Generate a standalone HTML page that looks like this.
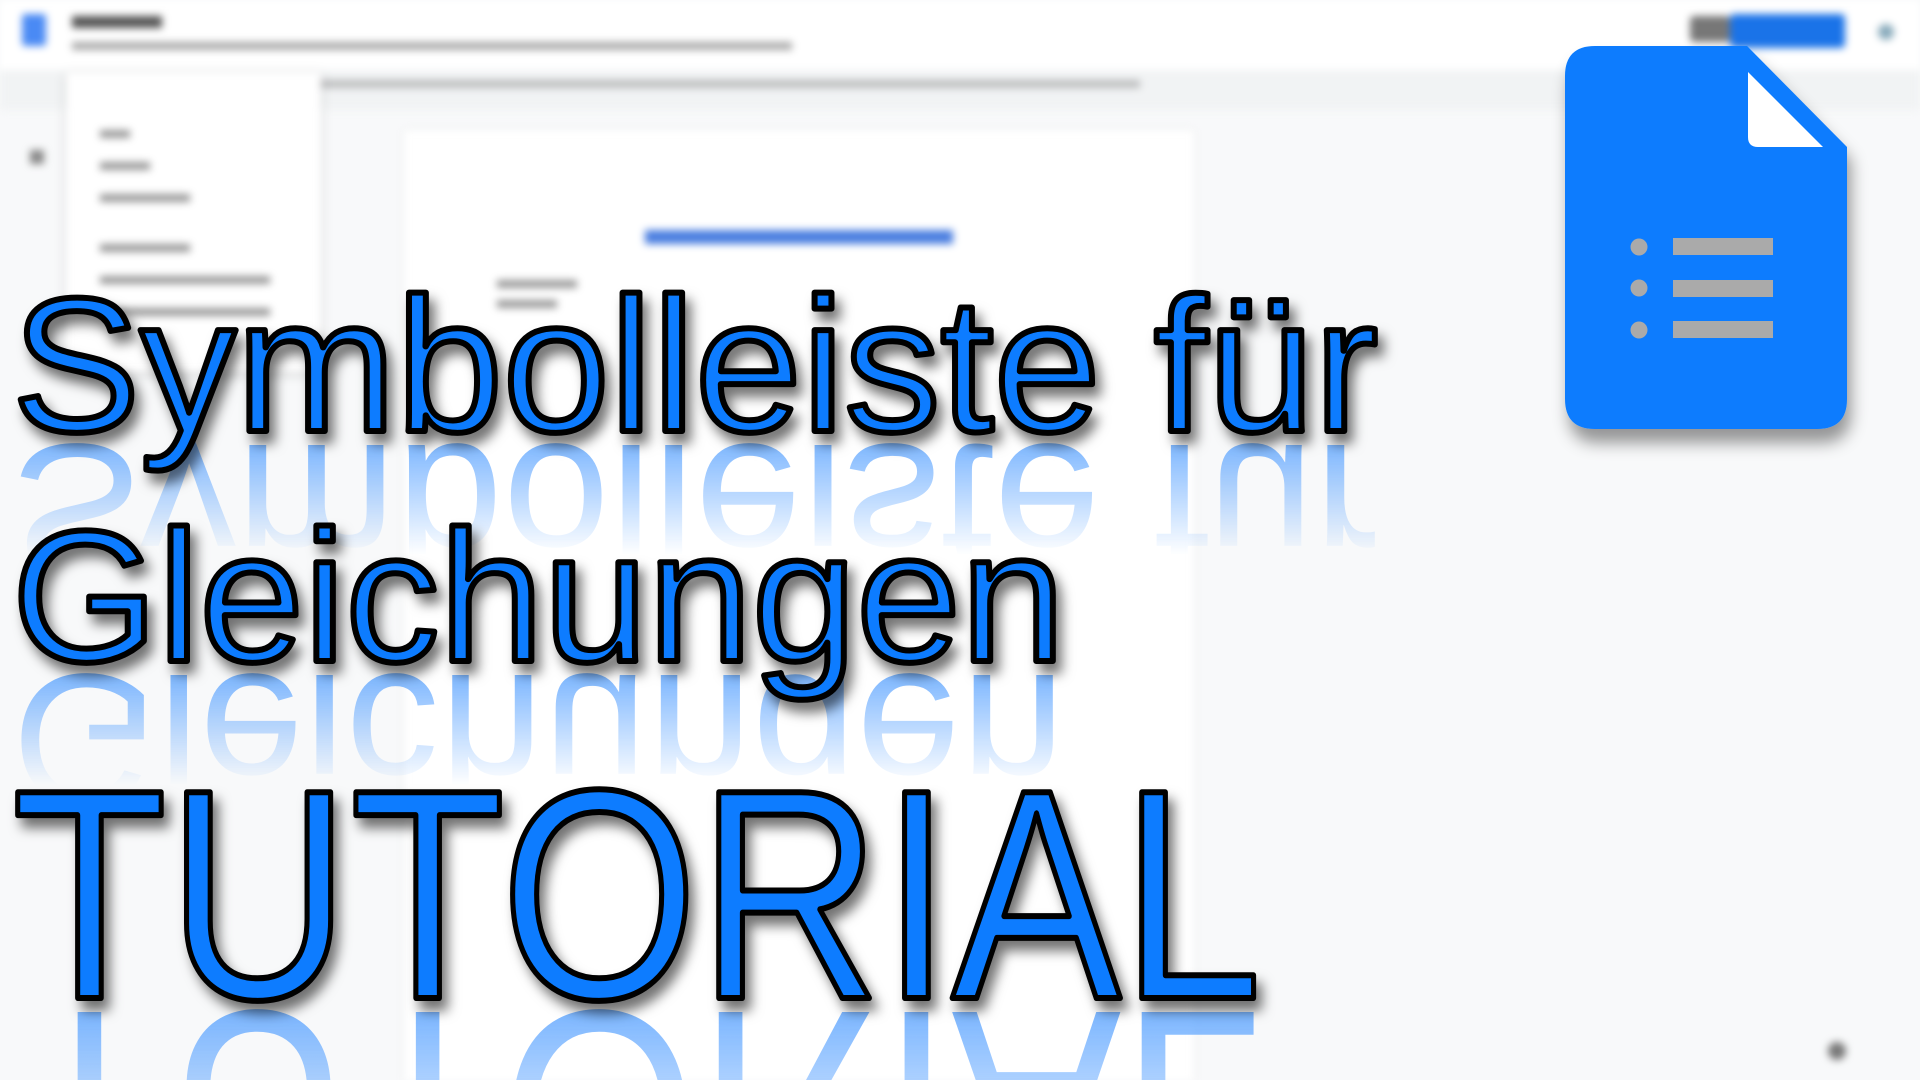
<!DOCTYPE html>
<html><head><meta charset="utf-8"><style>
html,body{margin:0;padding:0;width:1920px;height:1080px;overflow:hidden;background:#f8f9fa;font-family:"Liberation Sans",sans-serif}
#bg{position:absolute;left:0;top:0;width:1920px;height:1080px;overflow:hidden;filter:blur(4px)}
.a{position:absolute}
</style></head><body>
<div id="bg">
 <div class="a" style="left:0;top:0;width:1920px;height:70px;background:#fff"></div>
 <div class="a" style="left:0;top:70px;width:1920px;height:40px;background:#f1f3f4"></div>
 <div class="a" style="left:22px;top:14px;width:24px;height:32px;background:#4a8af4;border-radius:3px"></div>
 <div class="a" style="left:72px;top:16px;width:90px;height:12px;background:#555"></div>
 <div class="a" style="left:72px;top:42px;width:720px;height:8px;background:#aaa"></div>
 <div class="a" style="left:1690px;top:16px;width:40px;height:26px;background:#777;border-radius:4px"></div>
 <div class="a" style="left:1730px;top:14px;width:115px;height:34px;background:#1a73e8;border-radius:4px"></div>
 <div class="a" style="left:1878px;top:24px;width:16px;height:16px;background:#8ab;border-radius:50%"></div>
 <div class="a" style="left:320px;top:80px;width:820px;height:8px;background:#888;opacity:.5"></div>
 <div class="a" style="left:66px;top:72px;width:255px;height:300px;background:#fff;box-shadow:0 2px 8px rgba(0,0,0,.2)"></div>
 <div class="a" style="left:100px;top:130px;width:30px;height:8px;background:#999"></div>
 <div class="a" style="left:100px;top:162px;width:50px;height:8px;background:#999"></div>
 <div class="a" style="left:100px;top:194px;width:90px;height:8px;background:#999"></div>
 <div class="a" style="left:100px;top:244px;width:90px;height:8px;background:#999"></div>
 <div class="a" style="left:100px;top:276px;width:170px;height:8px;background:#999"></div>
 <div class="a" style="left:100px;top:308px;width:170px;height:8px;background:#999"></div>
 <div class="a" style="left:404px;top:130px;width:790px;height:950px;background:#fff;box-shadow:0 0 4px rgba(0,0,0,.1)"></div>
 <div class="a" style="left:645px;top:230px;width:308px;height:14px;background:#4a7ee0"></div>
 <div class="a" style="left:497px;top:280px;width:80px;height:8px;background:#999"></div>
 <div class="a" style="left:497px;top:300px;width:60px;height:8px;background:#999"></div>
 <div class="a" style="left:30px;top:150px;width:14px;height:14px;background:#888"></div>
 <div class="a" style="left:1828px;top:1042px;width:18px;height:18px;background:#777;border-radius:50%"></div>
</div>
<svg class="a" style="left:0;top:0" width="1920" height="1080" viewBox="0 0 1920 1080">
<defs>
 <filter id="sh" x="-5%" y="-20%" width="115%" height="150%"><feDropShadow dx="6" dy="10" stdDeviation="6" flood-color="#000" flood-opacity=".55"/></filter>
 <filter id="lsh" x="-20%" y="-10%" width="150%" height="130%"><feDropShadow dx="4" dy="14" stdDeviation="8" flood-color="#000" flood-opacity=".4"/></filter>
 <linearGradient id="g1" gradientUnits="userSpaceOnUse" x1="0" y1="440" x2="0" y2="555"><stop offset="0" stop-color="#fff"/><stop offset="1" stop-color="#fff" stop-opacity="0"/></linearGradient>
 <linearGradient id="g2" gradientUnits="userSpaceOnUse" x1="0" y1="672" x2="0" y2="785"><stop offset="0" stop-color="#fff"/><stop offset="1" stop-color="#fff" stop-opacity="0"/></linearGradient>
 <linearGradient id="g3" gradientUnits="userSpaceOnUse" x1="0" y1="1010" x2="0" y2="1200"><stop offset="0" stop-color="#fff"/><stop offset="1" stop-color="#fff" stop-opacity="0"/></linearGradient>
 <mask id="m1" maskUnits="userSpaceOnUse"><rect x="0" y="438" width="1500" height="118" fill="url(#g1)"/></mask>
 <mask id="m2" maskUnits="userSpaceOnUse"><rect x="0" y="668" width="1200" height="118" fill="url(#g2)"/></mask>
 <mask id="m3" maskUnits="userSpaceOnUse"><rect x="0" y="1005" width="1400" height="75" fill="url(#g3)"/></mask>
</defs>
<g font-family="Liberation Sans, sans-serif">
 <g fill="#5aa3ff" opacity=".8">
  <g mask="url(#m1)"><text x="12" y="431" font-size="191" textLength="1366" lengthAdjust="spacingAndGlyphs" transform="translate(0,876) scale(1,-1)">Symbolleiste für</text></g>
  <g mask="url(#m2)"><text x="12" y="661" font-size="187" textLength="1053" lengthAdjust="spacingAndGlyphs" transform="translate(0,1336) scale(1,-1)">Gleichungen</text></g>
  <g mask="url(#m3)"><text x="12" y="998" font-size="299" textLength="1250" lengthAdjust="spacingAndGlyphs" transform="translate(0,2010) scale(1,-1)">TUTORIAL</text></g>
 </g>
 <g fill="#0a7cff" stroke="#000" stroke-width="6" stroke-linejoin="round" filter="url(#sh)">
  <text x="12" y="431" font-size="191" textLength="1366" lengthAdjust="spacingAndGlyphs">Symbolleiste für</text>
  <text x="12" y="661" font-size="187" textLength="1053" lengthAdjust="spacingAndGlyphs">Gleichungen</text>
  <text x="12" y="998" font-size="299" textLength="1250" lengthAdjust="spacingAndGlyphs">TUTORIAL</text>
 </g>
</g>
<g filter="url(#lsh)">
 <path d="M1595 46 H1747 L1847 147 V399 Q1847 429 1817 429 H1595 Q1565 429 1565 399 V76 Q1565 46 1595 46 Z" fill="#0a7cfe"/>
</g>
<path d="M1748 72 L1823 147 H1758 Q1748 147 1748 137 Z" fill="#fff"/>
<g fill="#aaa">
 <circle cx="1639" cy="247" r="8.5"/><circle cx="1639" cy="288" r="8.5"/><circle cx="1639" cy="330" r="8.5"/>
 <rect x="1673" y="238" width="100" height="17"/><rect x="1673" y="280" width="100" height="17"/><rect x="1673" y="321" width="100" height="17"/>
</g>
</svg>
</body></html>
